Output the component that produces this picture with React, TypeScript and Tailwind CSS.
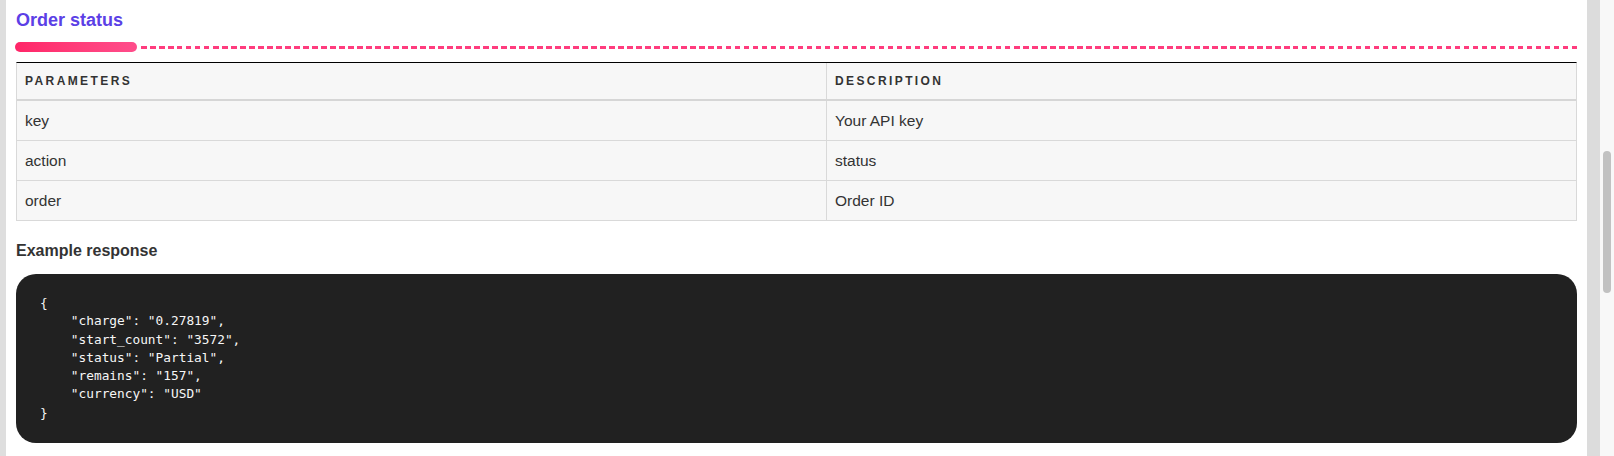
import React from "react";

const rows: [string, string][] = [
  ["key", "Your API key"],
  ["action", "status"],
  ["order", "Order ID"],
];

const code = `{
    "charge": "0.27819",
    "start_count": "3572",
    "status": "Partial",
    "remains": "157",
    "currency": "USD"
}`;

export default function App() {
  return (
    <div className="flex h-[456px] w-[1614px] overflow-hidden bg-white font-['Liberation_Sans',Arial,sans-serif] text-[#333]">
      <div className="w-[6px] shrink-0 bg-[#dedede]" />
      <main className="w-[1581px] shrink-0 px-[10px] pt-[10px]">
        <h2 className="text-[18px] font-bold leading-[20px] text-[#5b40e6]">Order status</h2>
        <div className="-ml-px mt-[12px] flex h-[10px] items-center">
          <div className="h-[10px] w-[122px] shrink-0 rounded-full bg-gradient-to-r from-[#ff2568] to-[#ff4d8b]" />
          <div className="ml-[4px] h-[3px] flex-1 bg-[repeating-linear-gradient(90deg,#ff3c7e_0_5.5px,transparent_5.5px_9px)]" />
        </div>

        <div className="mt-[10px] border-x border-t border-x-[#d9d9d9] border-t-black bg-[#f7f7f7]">
          <div className="flex h-[38px] border-b-2 border-[#d6d6d6]">
            <div className="flex w-[810px] shrink-0 items-center border-r border-[#d9d9d9] px-[8px] text-[12px] font-bold uppercase tracking-[0.2em] text-[#333]">
              Parameters
            </div>
            <div className="flex flex-1 items-center px-[8px] text-[12px] font-bold uppercase tracking-[0.2em] text-[#333]">
              Description
            </div>
          </div>
          {rows.map(([p, d]) => (
            <div key={p} className="flex h-[40px] border-b border-[#d9d9d9] text-[15.5px]">
              <div className="flex w-[810px] shrink-0 items-center border-r border-[#d9d9d9] px-[8px]">{p}</div>
              <div className="flex flex-1 items-center px-[8px]">{d}</div>
            </div>
          ))}
        </div>

        <h3 className="mt-[18px] text-[16px] font-bold leading-[24px] text-[#333]">Example response</h3>

        <pre className="mt-[11px] rounded-[20px] bg-[#212121] pb-[21px] pl-[24px] pt-[20px] font-['DejaVu_Sans_Mono',monospace] text-[12.8px] leading-[18.3px] whitespace-pre text-[#f6f6f6]">
          {code}
        </pre>
      </main>
      <div className="w-[13px] shrink-0 bg-[#dcdcdc]" />
      <div className="relative w-[14px] shrink-0 bg-[#f8f8f8]">
        <div className="absolute left-[3px] top-[151px] h-[142px] w-[8px] rounded-full bg-[#c1c1c1]" />
      </div>
    </div>
  );
}
